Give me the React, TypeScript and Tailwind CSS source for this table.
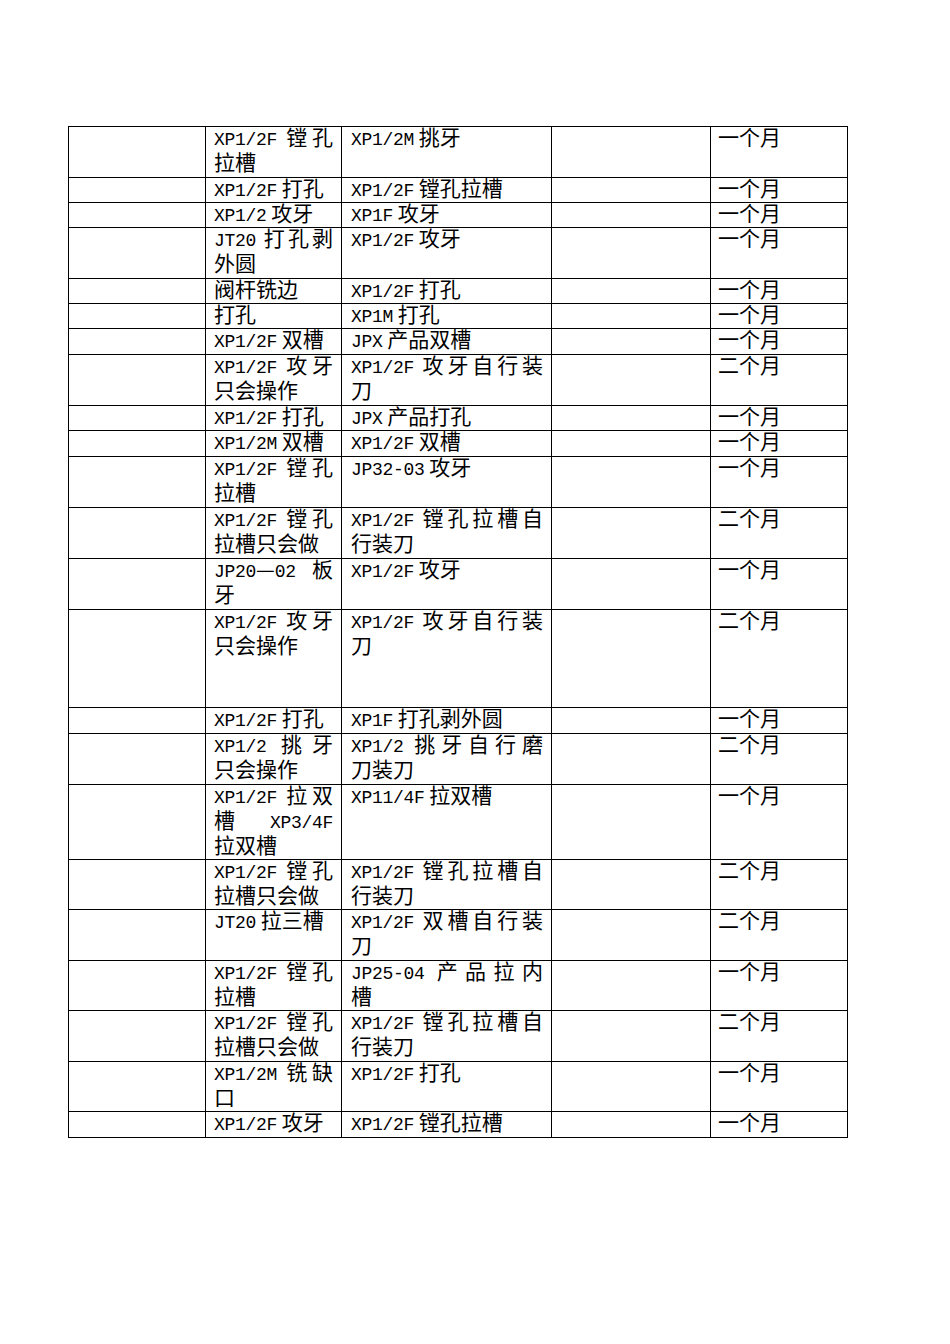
type Row = { a: string[]; b: string[]; m: string; h: string };

const rows: Row[] = [
  { a: ["XP1/2F 镗孔", "拉槽"], b: ["XP1/2M 挑牙"], m: "一个月", h: "h-[51px]" },
  { a: ["XP1/2F 打孔"], b: ["XP1/2F 镗孔拉槽"], m: "一个月", h: "h-[25px]" },
  { a: ["XP1/2 攻牙"], b: ["XP1F 攻牙"], m: "一个月", h: "h-[25px]" },
  { a: ["JT20 打孔剥", "外圆"], b: ["XP1/2F 攻牙"], m: "一个月", h: "h-[51px]" },
  { a: ["阀杆铣边"], b: ["XP1/2F 打孔"], m: "一个月", h: "h-[25px]" },
  { a: ["打孔"], b: ["XP1M 打孔"], m: "一个月", h: "h-[25px]" },
  { a: ["XP1/2F 双槽"], b: ["JPX 产品双槽"], m: "一个月", h: "h-[26px]" },
  { a: ["XP1/2F 攻牙", "只会操作"], b: ["XP1/2F 攻牙自行装", "刀"], m: "二个月", h: "h-[51px]" },
  { a: ["XP1/2F 打孔"], b: ["JPX 产品打孔"], m: "一个月", h: "h-[25px]" },
  { a: ["XP1/2M 双槽"], b: ["XP1/2F 双槽"], m: "一个月", h: "h-[26px]" },
  { a: ["XP1/2F 镗孔", "拉槽"], b: ["JP32-03 攻牙"], m: "一个月", h: "h-[51px]" },
  { a: ["XP1/2F 镗孔", "拉槽只会做"], b: ["XP1/2F 镗孔拉槽自", "行装刀"], m: "二个月", h: "h-[51px]" },
  { a: ["JP20—02 板", "牙"], b: ["XP1/2F 攻牙"], m: "一个月", h: "h-[51px]" },
  { a: ["XP1/2F 攻牙", "只会操作"], b: ["XP1/2F 攻牙自行装", "刀"], m: "二个月", h: "h-[98px]" },
  { a: ["XP1/2F 打孔"], b: ["XP1F 打孔剥外圆"], m: "一个月", h: "h-[26px]" },
  { a: ["XP1/2 挑牙", "只会操作"], b: ["XP1/2 挑牙自行磨", "刀装刀"], m: "二个月", h: "h-[51px]" },
  { a: ["XP1/2F 拉双", "槽 XP3/4F", "拉双槽"], b: ["XP11/4F 拉双槽"], m: "一个月", h: "h-[75px]" },
  { a: ["XP1/2F 镗孔", "拉槽只会做"], b: ["XP1/2F 镗孔拉槽自", "行装刀"], m: "二个月", h: "h-[50px]" },
  { a: ["JT20 拉三槽"], b: ["XP1/2F 双槽自行装", "刀"], m: "二个月", h: "h-[51px]" },
  { a: ["XP1/2F 镗孔", "拉槽"], b: ["JP25-04 产品拉内", "槽"], m: "一个月", h: "h-[50px]" },
  { a: ["XP1/2F 镗孔", "拉槽只会做"], b: ["XP1/2F 镗孔拉槽自", "行装刀"], m: "二个月", h: "h-[51px]" },
  { a: ["XP1/2M 铣缺", "口"], b: ["XP1/2F 打孔"], m: "一个月", h: "h-[50px]" },
  { a: ["XP1/2F 攻牙"], b: ["XP1/2F 镗孔拉槽"], m: "一个月", h: "h-[26px]" },
];

// latin runs get the narrow mono face, the rest stays in the CJK face
const Mixed = ({ text }: { text: string }) => (
  <>
    {text.split(/([!-~]+)/).map((part, i) =>
      /^[!-~]+$/.test(part) ? (
        <span key={i} className="font-['Liberation_Mono',monospace] text-[18px] leading-none tracking-[-0.3px]">
          {part}
        </span>
      ) : (
        <span key={i}>{part}</span>
      )
    )}
  </>
);

const Lines = ({ lines }: { lines: string[] }) => (
  <>
    {lines.map((line, i) => (
      <div
        key={i}
        className={`h-[25px] leading-[19px] ${i < lines.length - 1 ? "text-justify [text-align-last:justify]" : "text-left"}`}
      >
        <Mixed text={line} />
      </div>
    ))}
  </>
);

const cell = "border-r border-b border-black overflow-hidden";

export default function App() {
  return (
    <div className="min-h-[1344px] bg-white pt-[126px] pl-[68px] text-black font-['Noto_Sans_CJK_SC',sans-serif] text-[21px]">
      <div className="w-[780px] border-l border-t border-black">
        {rows.map((r, i) => (
          <div key={i} className={`grid grid-cols-[137px_136px_210px_159px_137px] ${r.h}`}>
            <div className={cell} />
            <div className={`${cell} pl-2 pr-2`}>
              <Lines lines={r.a} />
            </div>
            <div className={`${cell} pl-[9px] pr-2`}>
              <Lines lines={r.b} />
            </div>
            <div className={cell} />
            <div className={`${cell} pl-[7px]`}>
              <Lines lines={[r.m]} />
            </div>
          </div>
        ))}
      </div>
    </div>
  );
}
